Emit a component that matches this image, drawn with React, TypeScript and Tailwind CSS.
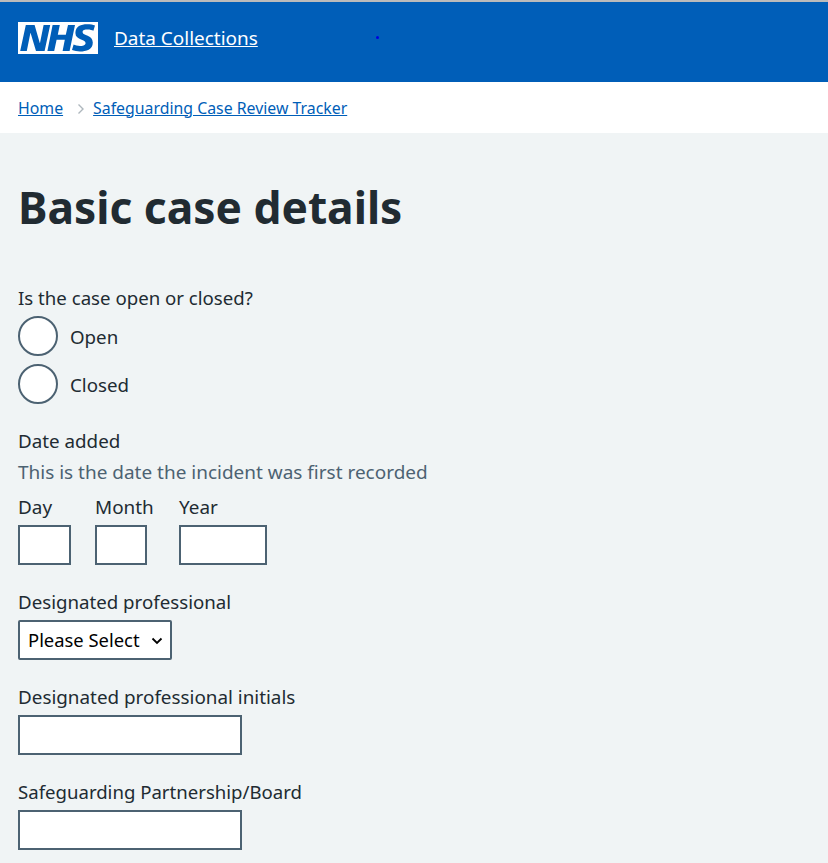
const fontStack = "font-['Noto_Sans','Open_Sans',sans-serif]"

function Radio({ label }: { label: string }) {
  return (
    <label className="flex items-center h-10">
      <input
        type="radio"
        name="status"
        className="appearance-none w-10 h-10 rounded-full border-2 border-[#4c6272] bg-white m-0"
      />
      <span className="ml-3 pt-[2px] text-[18.7px] text-[#212b32]">{label}</span>
    </label>
  )
}

function DatePart({ label, width, column }: { label: string; width: string; column?: string }) {
  return (
    <div className={`flex flex-col ${column ?? ""}`}>
      <label className="text-[18.9px] leading-[26px] text-[#212b32]">{label}</label>
      <input type="text" className={`${width} h-10 mt-[5px] border-2 border-[#4c6272] bg-white`} />
    </div>
  )
}

function TextField({ label, size }: { label: string; size: string }) {
  return (
    <div className="mt-6">
      <label className={`block ${size} leading-[26px] text-[#212b32]`}>{label}</label>
      <input type="text" className="block w-[224px] h-10 mt-[5px] border-2 border-[#4c6272] bg-white" />
    </div>
  )
}

export default function App() {
  return (
    <div className={`${fontStack} h-[863px] overflow-hidden bg-[#f0f4f5]`}>
      <header className="relative h-[82px] bg-[#005eb8] border-t-2 border-[#bbbbbb] flex items-start pl-[18px] pt-5">
        <svg className="w-20 h-8" viewBox="0 0 40 16" aria-label="NHS">
          <path fill="#fff" d="M0 0h40v16H0z" />
          <path
            fill="#005eb8"
            d="M3.9 1.5h4.4l2.6 9h.1l1.8-9h3.3l-2.8 13H9l-2.7-9h-.1l-1.8 9H1.1M17.3 1.5h3.6l-1 4.9h4L25 1.5h3.5l-2.7 13h-3.5l1.1-5.6h-4.1l-1.2 5.6h-3.4M37.7 4.4c-.7-.3-1.6-.6-2.9-.6-1.4 0-2.5.2-2.5 1.3 0 1.8 5.1 1.2 5.1 5.1 0 3.6-3.3 4.5-6.4 4.5-1.3 0-2.9-.3-4-.7l.8-2.7c.7.4 2.1.7 3.2.7s2.8-.2 2.8-1.5c0-2.1-5.1-1.3-5.1-5 0-3.4 2.9-4.4 5.8-4.4 1.6 0 3.1.2 4 .6"
          />
        </svg>
        <a className="ml-4 mt-[2px] text-[18.95px] leading-7 text-white underline">Data Collections</a>
        <span className="absolute left-[376px] top-[34px] w-[3px] h-[3px] rounded-full bg-[#0000e0]" />
      </header>

      <nav className="h-[51px] bg-white flex items-center pl-[18px] pt-[2px] text-[15.85px]">
        <a className="text-[#005eb8] underline">Home</a>
        <svg className="w-[8px] h-[12px] ml-[14px] mr-[8px]" viewBox="0 0 8 12" fill="none">
          <path d="M1.5 1.5 6 6l-4.5 4.5" stroke="#aeb7bd" strokeWidth="1.4" />
        </svg>
        <a className="text-[#005eb8] underline">Safeguarding Case Review Tracker</a>
      </nav>

      <main className="pl-[18px]">
        <h1 className="mt-[42px] text-[44.3px] leading-[64px] font-bold text-[#212b32]">Basic case details</h1>

        <p className="mt-[46px] text-[18.65px] leading-[26px] text-[#212b32]">Is the case open or closed?</p>
        <div className="mt-[5px] flex flex-col gap-2">
          <Radio label="Open" />
          <Radio label="Closed" />
        </div>

        <p className="mt-6 text-[18.8px] leading-[26px] text-[#212b32]">Date added</p>
        <p className="mt-[5px] text-[18.98px] leading-[26px] text-[#4c6272]">This is the date the incident was first recorded</p>

        <div className="mt-[9px] flex gap-6">
          <DatePart label="Day" width="w-[53px]" />
          <DatePart label="Month" width="w-[52px]" column="w-[60px]" />
          <DatePart label="Year" width="w-[88px]" />
        </div>

        <div className="mt-6">
          <label className="block text-[18.7px] leading-[26px] text-[#212b32]">Designated professional</label>
          <div className="relative w-[154px] mt-[5px]">
            <select className="appearance-none block w-full h-10 pl-2 border-2 border-[#4c6272] rounded-[2px] bg-white text-[18.4px] text-black">
              <option>Please Select</option>
            </select>
            <svg className="absolute right-[9px] top-[17px] w-3 h-2 pointer-events-none" viewBox="0 0 12 8" fill="none">
              <path d="M1.5 1.5 6 6l4.5-4.5" stroke="#000" strokeWidth="1.8" />
            </svg>
          </div>
        </div>

        <TextField label="Designated professional initials" size="text-[18.85px]" />
        <TextField label="Safeguarding Partnership/Board" size="text-[18.6px]" />
      </main>
    </div>
  )
}
